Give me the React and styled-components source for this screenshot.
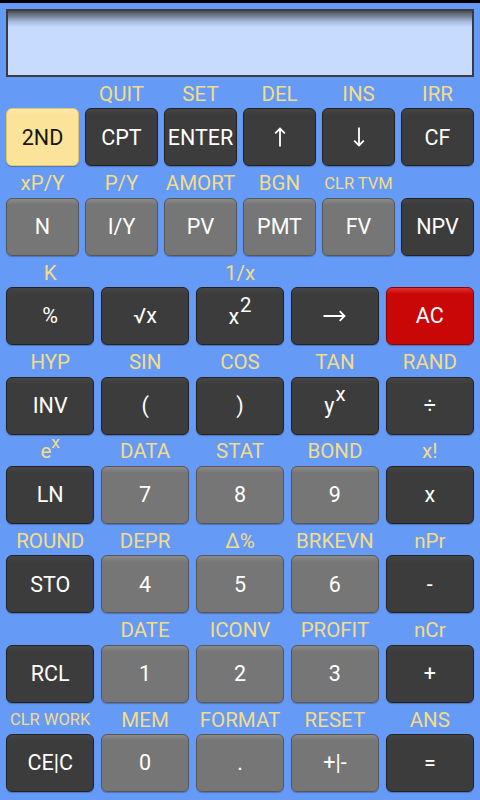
import styled, { createGlobalStyle } from 'styled-components';

const GlobalStyle = createGlobalStyle`
  html, body {
    margin: 0;
    padding: 0;
    background: #659af6;
  }
  body {
    font-family: Roboto, "Noto Sans", "Liberation Sans", sans-serif;
  }
`;

// Whole calculator surface
const Screen = styled.div`
  width: 480px;
  height: 800px;
  background: #659af6;
  display: flex;
  flex-direction: column;
  box-sizing: border-box;
  border-top: 3px solid #000;
  overflow: hidden;
`;

const Display = styled.div`
  margin: 6px 6px 0;
  height: 68px;
  box-sizing: border-box;
  border: 2px solid #3b3b3b;
  background: linear-gradient(
    to bottom,
    #4a4c55 0px,
    #7f8aa0 6px,
    #a9bde0 11px,
    #c6dbfd 16px,
    #c6dbfd 100%
  );
`;

const Keypad = styled.div`
  flex: 1;
  display: flex;
  flex-direction: column;
  padding: 0 6px 8px;
`;

const Section = styled.div`
  flex: 1;
  display: flex;
  flex-direction: column;
`;

const LabelRow = styled.div`
  flex: 1;
  display: grid;
  grid-template-columns: repeat(${(p) => p.$cols}, 1fr);
  column-gap: ${(p) => (p.$cols === 6 ? '6px' : '6.5px')};
  align-items: center;
`;

const Label = styled.span`
  text-align: center;
  color: #f4dc86;
  font-size: ${(p) => (p.$small ? '16.5px' : '20.5px')};
  line-height: 1;
  padding-top: ${(p) => (p.$small ? '4px' : '3px')};
  white-space: nowrap;

  sup {
    font-size: 0.85em;
    vertical-align: 0.6em;
    line-height: 0;
  }
`;

const KeyRow = styled.div`
  height: 58px;
  display: grid;
  grid-template-columns: repeat(${(p) => p.$cols}, 1fr);
  column-gap: ${(p) => (p.$cols === 6 ? '6px' : '6.5px')};
`;

const palette = {
  dark: { bg: '#3c3c3c', top: '#454545', border: '#222', color: '#fff' },
  grey: { bg: '#767676', top: '#8a8a8a', border: '#575757', color: '#fff' },
  yellow: { bg: '#fbe39a', top: '#fde9ac', border: '#e3c56c', color: '#151515' },
  red: { bg: '#c90707', top: '#e0322c', border: '#8c0202', color: '#fff' },
};

const Key = styled.button`
  box-sizing: border-box;
  margin: 0;
  padding: 0;
  height: 100%;
  border-radius: 6px;
  border: 1.5px solid ${(p) => palette[p.$kind].border};
  background: linear-gradient(
    to bottom,
    ${(p) => palette[p.$kind].top} 0px,
    ${(p) => palette[p.$kind].bg} 6px,
    ${(p) => palette[p.$kind].bg} 100%
  );
  color: ${(p) => palette[p.$kind].color};
  font-family: Roboto, "Noto Sans", "Liberation Sans", sans-serif;
  font-size: 21.5px;
  font-weight: 400;
  display: flex;
  align-items: center;
  justify-content: center;
  box-shadow: 0 1px 1px rgba(0, 0, 0, 0.25);

  svg {
    display: block;
  }
`;

const KeyText = styled.span`
  line-height: 1;

  sup {
    font-size: 0.95em;
    vertical-align: 0.6em;
    line-height: 0;
    margin-left: 1px;
  }
`;

const sup = (base, exp) => (
  <>
    {base}
    <sup>{exp}</sup>
  </>
);

// Thin arrows, drawn to match the calculator glyphs
const ArrowUp = () => (
  <svg width="12" height="20" viewBox="0 0 12 20" fill="none" stroke="#fff" strokeWidth="1.8">
    <path d="M6 19.5V1.5M1.2 6.3L6 1.5l4.8 4.8" />
  </svg>
);

const ArrowDown = () => (
  <svg width="12" height="20" viewBox="0 0 12 20" fill="none" stroke="#fff" strokeWidth="1.8">
    <path d="M6 0.5V18.5M1.2 13.7L6 18.5l4.8-4.8" />
  </svg>
);

const ArrowRight = () => (
  <svg width="23" height="12" viewBox="0 0 23 12" fill="none" stroke="#fff" strokeWidth="1.8">
    <path d="M0.5 6H21.5M16.7 1.2L21.5 6l-4.8 4.8" />
  </svg>
);

const rows = [
  {
    cols: 6,
    labels: ['', 'QUIT', 'SET', 'DEL', 'INS', 'IRR'],
    keys: [
      ['2ND', 'yellow'],
      ['CPT', 'dark'],
      ['ENTER', 'dark'],
      [<ArrowUp />, 'dark', true],
      [<ArrowDown />, 'dark', true],
      ['CF', 'dark'],
    ],
  },
  {
    cols: 6,
    labels: ['xP/Y', 'P/Y', 'AMORT', 'BGN', { text: 'CLR TVM', small: true }, ''],
    keys: [
      ['N', 'grey'],
      ['I/Y', 'grey'],
      ['PV', 'grey'],
      ['PMT', 'grey'],
      ['FV', 'grey'],
      ['NPV', 'dark'],
    ],
  },
  {
    cols: 5,
    labels: ['K', '', '1/x', '', ''],
    keys: [
      ['%', 'dark'],
      ['√x', 'dark'],
      [sup('x', '2'), 'dark'],
      [<ArrowRight />, 'dark', true],
      ['AC', 'red'],
    ],
  },
  {
    cols: 5,
    labels: ['HYP', 'SIN', 'COS', 'TAN', 'RAND'],
    keys: [
      ['INV', 'dark'],
      ['(', 'dark'],
      [')', 'dark'],
      [sup('y', 'x'), 'dark'],
      ['÷', 'dark'],
    ],
  },
  {
    cols: 5,
    labels: [sup('e', 'x'), 'DATA', 'STAT', 'BOND', 'x!'],
    keys: [
      ['LN', 'dark'],
      ['7', 'grey'],
      ['8', 'grey'],
      ['9', 'grey'],
      ['x', 'dark'],
    ],
  },
  {
    cols: 5,
    labels: ['ROUND', 'DEPR', 'Δ%', 'BRKEVN', 'nPr'],
    keys: [
      ['STO', 'dark'],
      ['4', 'grey'],
      ['5', 'grey'],
      ['6', 'grey'],
      ['-', 'dark'],
    ],
  },
  {
    cols: 5,
    labels: ['', 'DATE', 'ICONV', 'PROFIT', 'nCr'],
    keys: [
      ['RCL', 'dark'],
      ['1', 'grey'],
      ['2', 'grey'],
      ['3', 'grey'],
      ['+', 'dark'],
    ],
  },
  {
    cols: 5,
    labels: [{ text: 'CLR WORK', small: true }, 'MEM', 'FORMAT', 'RESET', 'ANS'],
    keys: [
      ['CE|C', 'dark'],
      ['0', 'grey'],
      ['.', 'grey'],
      ['+|-', 'grey'],
      ['=', 'dark'],
    ],
  },
];

const isSmall = (l) => l !== null && typeof l === 'object' && l.small === true;

export default function App() {
  return (
    <>
      <GlobalStyle />
      <Screen>
        <Display />
        <Keypad>
          {rows.map((row, i) => (
            <Section key={i}>
              <LabelRow $cols={row.cols}>
                {row.labels.map((l, j) =>
                  isSmall(l) ? (
                    <Label key={j} $small>
                      {l.text}
                    </Label>
                  ) : (
                    <Label key={j}>{l}</Label>
                  )
                )}
              </LabelRow>
              <KeyRow $cols={row.cols}>
                {row.keys.map(([content, kind, icon], j) => (
                  <Key key={j} $kind={kind}>
                    {icon ? content : <KeyText>{content}</KeyText>}
                  </Key>
                ))}
              </KeyRow>
            </Section>
          ))}
        </Keypad>
      </Screen>
    </>
  );
}
